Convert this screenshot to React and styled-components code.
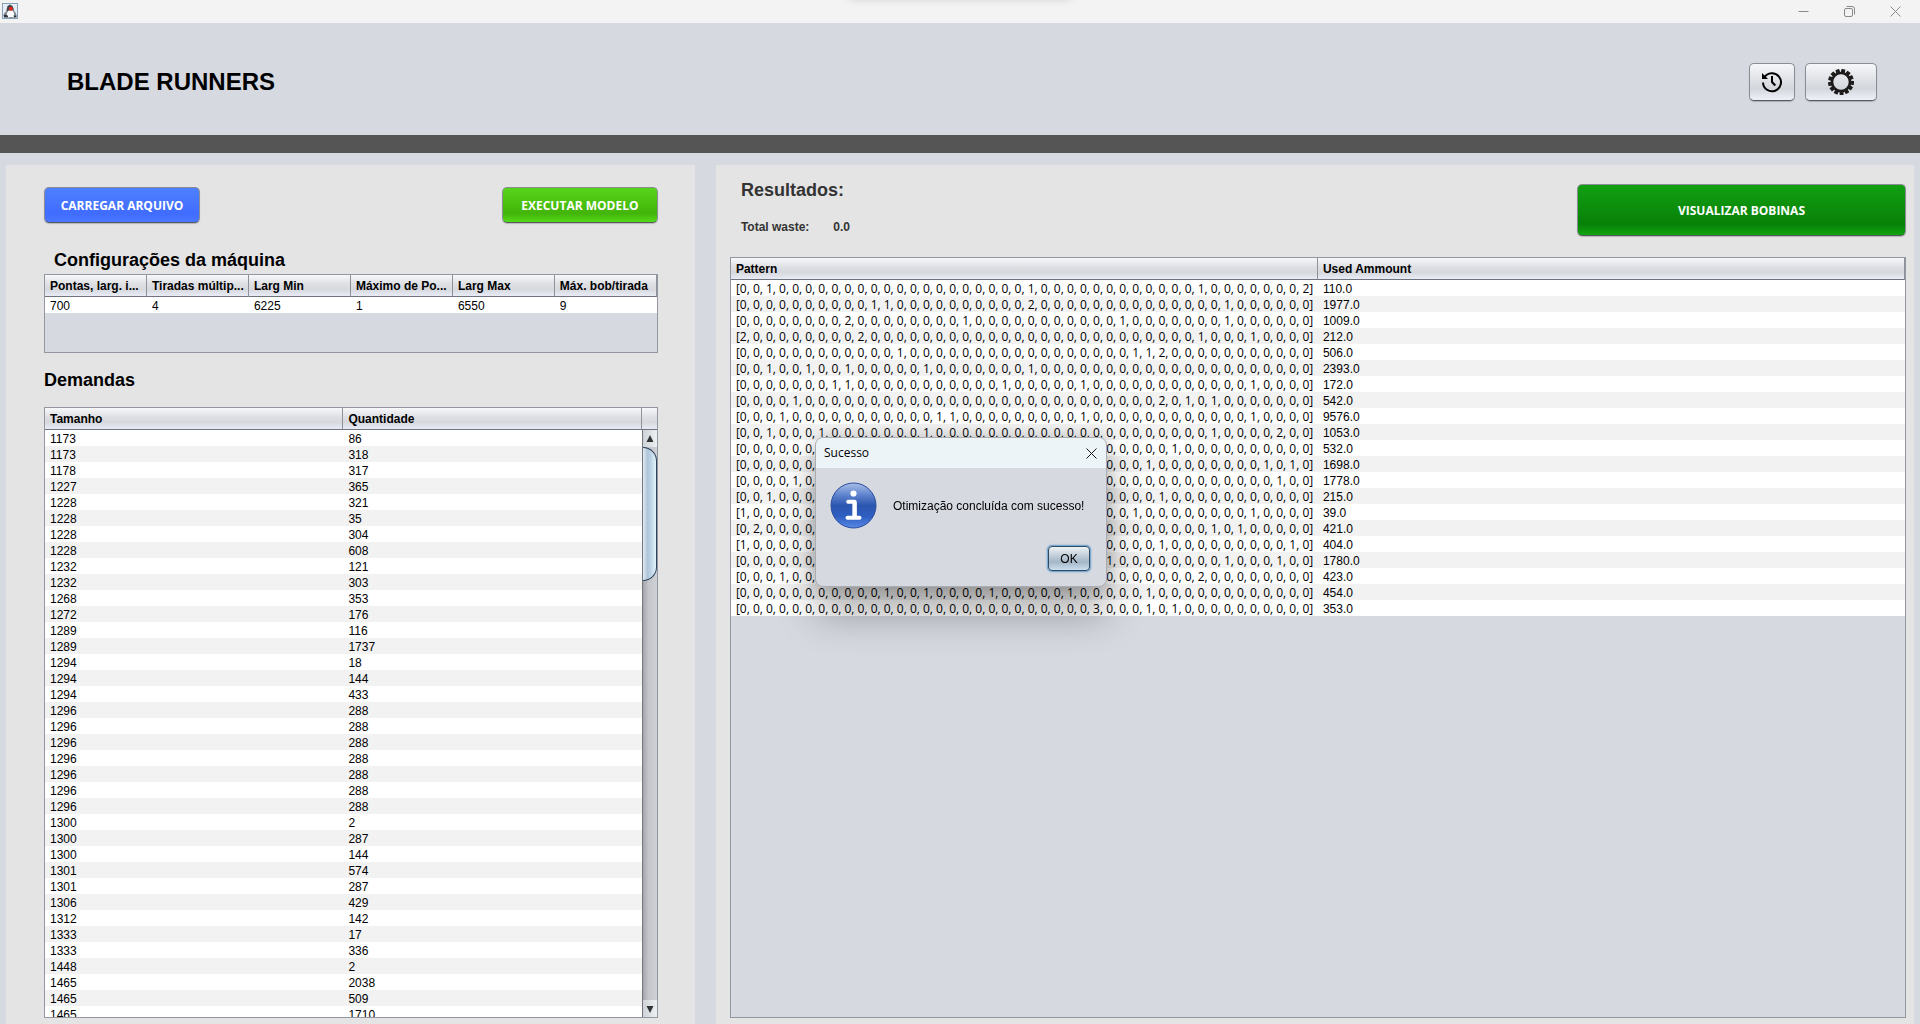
import React from "react";
import styled, { createGlobalStyle, css } from "styled-components";

const ui = '"Liberation Sans", Arial, Helvetica, sans-serif';
const segoe = '"Open Sans", "Noto Sans", sans-serif';

const Global = createGlobalStyle`
  *, *::before, *::after { box-sizing: border-box; }
  body { margin: 0; background: #d6d9e0; font: 12px/16px ${ui}; color: #000; }
  h1, h2, h3, p, dl, dd, dt { margin: 0; }
  button { font: inherit; color: inherit; padding: 0; cursor: pointer; }
`;

const Window = styled.div`
  display: flex;
  flex-direction: column;
  height: 100vh;
  min-height: 640px;
  overflow: hidden;
`;

const TitleBar = styled.div`
  position: relative;
  overflow: hidden;
  display: flex;
  justify-content: space-between;
  align-items: center;
  flex: none;
  height: 23px;
  padding: 0 2px 1px;
  background: #f3f3f3;

  &::before {
    content: "";
    position: absolute;
    top: -10px;
    left: 50%;
    width: 224px;
    height: 10px;
    margin-left: -112px;
    border-radius: 8px;
    box-shadow: 0 0 8px rgba(0, 0, 0, 0.12);
  }
`;

const Caption = styled.div`
  display: flex;
`;

const CaptionButton = styled.button`
  display: grid;
  place-items: center;
  width: ${(p) => p.$width || 46}px;
  height: 20px;
  border: 0;
  background: none;
  color: ${(p) => p.$color || "#8a8a8a"};
`;

const Header = styled.header`
  display: flex;
  align-items: center;
  justify-content: space-between;
  flex: none;
  height: 130px;
  padding: 6px 43px 0 67px;
  border-bottom: 18px solid #555;
`;

const AppTitle = styled.h1`
  font-size: 24px;
  line-height: 28px;
`;

const Tools = styled.div`
  display: flex;
  gap: 10px;
`;

const raised = css`
  border: 1px solid #8a8d94;
  border-bottom-color: #55585e;
  border-radius: 5px;
  box-shadow: 0 1px 1px rgba(0, 0, 0, 0.2);
`;

const ToolButton = styled.button`
  ${raised}
  display: grid;
  place-items: center;
  width: ${(p) => p.$width}px;
  height: 38px;
  background: linear-gradient(#f6f7f9, #dfe1e6 45%, #d3d6dc 68%, #eef1f8);
`;

const tones = {
  blue: "linear-gradient(#4f80ff, #4573ff 50%, #406cff 75%, #4a78ff)",
  lime: "linear-gradient(#56d41a, #48bd0c 55%, #43b40b 75%, #54da16)",
  green: "linear-gradient(#11a011, #0b8a0b 55%, #088008 78%, #10a410)",
};

const ActionButton = styled.button`
  ${raised}
  width: ${(p) => p.$width}px;
  height: ${(p) => p.$height || 36}px;
  padding-top: 2px;
  background: ${(p) => tones[p.$tone]};
  color: #fff;
  font: 700 12px/16px ${segoe};
`;

const Workspace = styled.main`
  display: grid;
  grid-template-columns: minmax(0, 23fr) minmax(0, 40fr);
  gap: 21px;
  flex: 1;
  min-height: 0;
  padding: 12px 6px 0;
`;

const Panel = styled.section`
  display: flex;
  flex-direction: column;
  min-height: 0;
  padding: ${(p) => p.$padding};
  background: #e4e4e4;
`;

const Row = styled.div`
  display: flex;
  justify-content: space-between;
  align-items: center;
  margin-bottom: ${(p) => p.$after}px;
`;

const Summary = styled.div`
  padding: 0 0 5px 11px;
`;

const Heading = styled.h2`
  margin: ${(p) => p.$margin || 0};
  font-size: 18px;
  line-height: 20px;
  color: ${(p) => p.$color || "#000"};
`;

const Waste = styled.dl`
  display: flex;
  gap: 24px;
  margin-top: 19px;
  font-weight: 700;
  color: #333;
`;

const Frame = styled.div`
  display: flex;
  align-items: flex-start;
  flex: ${(p) => (p.$height ? "none" : "1")};
  height: ${(p) => (p.$height ? `${p.$height}px` : "auto")};
  min-height: 0;
  overflow: hidden;
  border: 1px solid #9297a1;
  background: #d6d9e0;
`;

const headFill = css`
  height: 22px;
  border-bottom: 1px solid #6f737d;
  background: linear-gradient(#f8f8fa, #dfe1e5 40%, #d6d8dd 68%, #e9ecf6);
`;

const Table = styled.table`
  flex: 1;
  width: 100%;
  min-width: 0;
  table-layout: fixed;
  border-collapse: separate;
  border-spacing: 0;
`;

const Th = styled.th`
  ${headFill}
  width: ${(p) => p.$width || "auto"};
  padding: 2px 1px 0 5px;
  border-right: 1px solid #8e929b;
  text-align: left;
  line-height: 19px;
  white-space: nowrap;
  overflow: hidden;
`;

const Td = styled.td`
  height: 16px;
  padding: 2px 1px 0 5px;
  line-height: 14px;
  white-space: nowrap;
  overflow: hidden;
`;

const PatternTd = styled(Td)`
  padding-top: 1px;
  font-family: ${segoe};
`;

const Tr = styled.tr`
  background: #fff;
  &:nth-child(even) { background: #f2f2f2; }
`;

const ScrollColumn = styled.div`
  display: flex;
  flex-direction: column;
  align-self: stretch;
  flex: none;
  width: 15px;
`;

const ScrollCorner = styled.div`
  ${headFill}
  flex: none;
`;

const ScrollTrack = styled.div`
  display: flex;
  flex-direction: column;
  flex: 1;
  min-height: 0;
  border-left: 1px solid #74777d;
  background: linear-gradient(90deg, #a4a6ab, #c4c6cb 40%, #cfd1d6);
`;

const ScrollButton = styled.button`
  display: grid;
  place-items: center;
  flex: none;
  height: 17px;
  margin-top: ${(p) => (p.$end ? "auto" : 0)};
  border: 0;
  background: linear-gradient(90deg, #cfd2d6, #eef1f3);
`;

const ScrollThumb = styled.div`
  flex: none;
  height: 134px;
  border: 1px solid #2c4258;
  border-left: 0;
  border-radius: 0 14px 14px 0;
  background: linear-gradient(90deg, #dfeaf3, #b0c5da 35%, #bdd3e5 60%, #e2f4fd);
`;

const Dialog = styled.div`
  position: fixed;
  top: 50%;
  left: 50%;
  width: 292px;
  height: 150px;
  margin: -75px 0 0 -145px;
  display: flex;
  flex-direction: column;
  border: 1px solid #a9acb2;
  border-radius: 8px;
  overflow: hidden;
  background: #d6d9e0;
  box-shadow: 0 0 18px rgba(0, 0, 0, 0.18), 0 26px 42px rgba(0, 0, 0, 0.32);
`;

const DialogTitle = styled.div`
  display: flex;
  align-items: center;
  justify-content: space-between;
  height: 30px;
  flex: none;
  padding: 0 4px 0 8px;
  background: #ecf4f8;
  font: 12px/16px ${segoe};
`;

const DialogBody = styled.div`
  display: flex;
  align-items: center;
  gap: 16px;
  padding: 14px 14px 0;
`;

const DialogActions = styled.div`
  display: flex;
  justify-content: flex-end;
  padding: 17px 16px 0;
`;

const OkButton = styled.button`
  width: 42px;
  height: 25px;
  border: 1px solid #2f4a63;
  border-radius: 4px;
  background: linear-gradient(#eef2f5, #b9c7d3 45%, #a4b6c6 65%, #cbdff0);
  box-shadow: 0 0 0 1px #7ba9d0, 0 0 2px 1px #7ba9d0;
  outline: none;
`;

const machine = [
  ["Pontas, larg. i...", "700"],
  ["Tiradas múltip...", "4"],
  ["Larg Min", "6225"],
  ["Máximo de Po...", "1"],
  ["Larg Max", "6550"],
  ["Máx. bob/tirada", "9"],
];

const demands = [
  [1173, 86], [1173, 318], [1178, 317], [1227, 365], [1228, 321], [1228, 35],
  [1228, 304], [1228, 608], [1232, 121], [1232, 303], [1268, 353], [1272, 176],
  [1289, 116], [1289, 1737], [1294, 18], [1294, 144], [1294, 433], [1296, 288],
  [1296, 288], [1296, 288], [1296, 288], [1296, 288], [1296, 288], [1296, 288],
  [1300, 2], [1300, 287], [1300, 144], [1301, 574], [1301, 287], [1306, 429],
  [1312, 142], [1333, 17], [1333, 336], [1448, 2], [1465, 2038], [1465, 509],
  [1465, 1710],
];

// Each pattern lists only its non-zero cuts, keyed by position.
const PATTERN_LENGTH = 44;
const results = [
  [{ 2: 1, 22: 1, 35: 1, 43: 2 }, "110.0"],
  [{ 10: 1, 11: 1, 22: 2, 37: 1 }, "1977.0"],
  [{ 8: 2, 17: 1, 29: 1, 37: 1 }, "1009.0"],
  [{ 0: 2, 9: 2, 35: 1, 39: 1 }, "212.0"],
  [{ 12: 1, 30: 1, 31: 1, 32: 2 }, "506.0"],
  [{ 2: 1, 5: 1, 8: 1, 14: 1, 22: 1 }, "2393.0"],
  [{ 7: 1, 8: 1, 20: 1, 26: 1, 39: 1 }, "172.0"],
  [{ 4: 1, 32: 2, 34: 1, 36: 1 }, "542.0"],
  [{ 3: 1, 15: 1, 16: 1, 26: 1, 39: 1 }, "9576.0"],
  [{ 2: 1, 6: 1, 14: 1, 36: 1, 41: 2 }, "1053.0"],
  [{ 33: 1 }, "532.0"],
  [{ 31: 1, 40: 1, 42: 1 }, "1698.0"],
  [{ 4: 1, 41: 1 }, "1778.0"],
  [{ 2: 1, 32: 1 }, "215.0"],
  [{ 0: 1, 30: 1, 39: 1 }, "39.0"],
  [{ 1: 2, 36: 1, 38: 1 }, "421.0"],
  [{ 0: 1, 32: 1, 42: 1 }, "404.0"],
  [{ 28: 1, 37: 1, 41: 1 }, "1780.0"],
  [{ 3: 1, 35: 2 }, "423.0"],
  [{ 11: 1, 14: 1, 19: 1, 25: 1, 31: 1 }, "454.0"],
  [{ 27: 3, 31: 1, 33: 1 }, "353.0"],
];

const formatPattern = (cuts) =>
  `[${Array.from({ length: PATTERN_LENGTH }, (_, i) => cuts[i] || 0).join(", ")}]`;

const DukeIcon = () => (
  <svg width="16" height="16" viewBox="0 0 16 16" aria-hidden="true">
    <rect x="0.500" y="0.500" width="15" height="15" fill="#e6edf4" stroke="#86a0b8" />
    <path d="M5.500 3 8 1.500 10.500 3l1 2.500.5 3.500H5L4.500 7z" fill="#3d454b" />
    <path d="M2 10.500 4.500 8H6v3.500H2.500zM11 8h1.500l1.500 2.500.5 2.500H12z" fill="#7d8890" />
    <path d="M5 10l1.500-2.500h4.500L12 11l.5 3H4.500z" fill="#fff" />
    <path d="M1.500 11.500h3L6 13v1.500H2zM11.500 12.500h3v2h-2.500z" fill="#2f373d" />
    <path d="M6.500 14.500h5" stroke="#8b959d" />
    <circle cx="8.800" cy="5.800" r="2" fill="#e8261d" />
  </svg>
);

const HistoryIcon = () => (
  <svg width="22" height="22" viewBox="0 0 22 22" fill="none" stroke="#000" strokeWidth="2" aria-hidden="true">
    <path d="M3.300 6.600A9 9 0 1 1 2 11.500" />
    <path d="M1 2v6h6z" fill="#000" stroke="none" />
    <path d="M11 5v6l3.300 3.500" />
  </svg>
);

const teeth = Array.from({ length: 13 }, (_, i) => (i * 360) / 13 + 11);

const GearIcon = () => (
  <svg width="26" height="26" viewBox="0 0 26 26" aria-hidden="true">
    <circle cx="13" cy="13" r="9" fill="none" stroke="#1d1b1b" strokeWidth="2.600" />
    {teeth.map((a) => (
      <rect key={a} x="11" y="0" width="4" height="4" rx="0.500" fill="#1d1b1b" transform={`rotate(${a} 13 13)`} />
    ))}
  </svg>
);

const CrossIcon = () => (
  <svg width="11" height="11" viewBox="0 0 11 11" fill="none" stroke="currentColor" aria-hidden="true">
    <path d="M.5.5l10 10M10.500.5l-10 10" />
  </svg>
);

const InfoIcon = () => (
  <svg width="47" height="47" viewBox="0 0 47 47" role="img" aria-label="Informação">
    <defs>
      <linearGradient id="info" x1="0" y1="0" x2="0" y2="1">
        <stop offset="0" stopColor="#a9bfe8" />
        <stop offset=".28" stopColor="#5b80cc" />
        <stop offset=".5" stopColor="#2c57b0" />
        <stop offset=".75" stopColor="#2f5fc2" />
        <stop offset="1" stopColor="#5a8ae6" />
      </linearGradient>
    </defs>
    <circle cx="23.500" cy="23.500" r="22.500" fill="url(#info)" stroke="#2b4c9c" />
    <circle cx="23.500" cy="11.500" r="3.100" fill="#fff" />
    <path d="M18.200 19.800h6.500v14.400M17.500 35.700h12" fill="none" stroke="#fff" strokeWidth="4" strokeLinecap="round" strokeLinejoin="round" />
    <path d="M22.500 20h4v15h-4z" fill="#fff" />
  </svg>
);

const Arrow = ({ down }) => (
  <svg width="8" height="8" viewBox="0 0 8 8" aria-hidden="true">
    <path d={down ? "M.5 1h7L4 8z" : "M.5 7h7L4 0z"} fill="#333" />
  </svg>
);

export default function App() {
  return (
    <Window>
      <Global />
      <TitleBar>
        <DukeIcon />
        <Caption>
          <CaptionButton aria-label="Minimizar">
            <svg width="11" height="11" viewBox="0 0 11 11" stroke="currentColor" aria-hidden="true"><path d="M.5 5.500h10" /></svg>
          </CaptionButton>
          <CaptionButton aria-label="Restaurar">
            <svg width="11" height="11" viewBox="0 0 11 11" fill="none" stroke="currentColor" aria-hidden="true">
              <rect x=".5" y="2.500" width="8" height="8" rx="1.500" />
              <path d="M2.500.5h5.500a2.500 2.500 0 0 1 2.500 2.500v5.500" />
            </svg>
          </CaptionButton>
          <CaptionButton aria-label="Fechar"><CrossIcon /></CaptionButton>
        </Caption>
      </TitleBar>

      <Header>
        <AppTitle>BLADE RUNNERS</AppTitle>
        <Tools>
          <ToolButton $width={46} aria-label="Histórico"><HistoryIcon /></ToolButton>
          <ToolButton $width={72} aria-label="Configurações"><GearIcon /></ToolButton>
        </Tools>
      </Header>

      <Workspace>
        <Panel $padding="22px 37px 6px 38px">
          <Row $after={27}>
            <ActionButton $tone="blue" $width={156}>CARREGAR ARQUIVO</ActionButton>
            <ActionButton $tone="lime" $width={156}>EXECUTAR MODELO</ActionButton>
          </Row>
          <Heading $margin="0 0 4px 10px">Configurações da máquina</Heading>
          <Frame $height={79}>
            <Table>
              <thead>
                <tr>{machine.map(([name]) => <Th key={name} scope="col">{name}</Th>)}</tr>
              </thead>
              <tbody>
                <Tr>{machine.map(([name, value]) => <Td key={name}>{value}</Td>)}</Tr>
              </tbody>
            </Table>
          </Frame>
          <Heading $margin="17px 0">Demandas</Heading>
          <Frame>
            <Table>
              <thead>
                <tr><Th scope="col">Tamanho</Th><Th scope="col">Quantidade</Th></tr>
              </thead>
              <tbody>
                {demands.map(([size, amount], i) => (
                  <Tr key={i}><Td>{size}</Td><Td>{amount}</Td></Tr>
                ))}
              </tbody>
            </Table>
            <ScrollColumn>
              <ScrollCorner />
              <ScrollTrack>
                <ScrollButton aria-label="Rolar para cima"><Arrow /></ScrollButton>
                <ScrollThumb />
                <ScrollButton $end aria-label="Rolar para baixo"><Arrow down /></ScrollButton>
              </ScrollTrack>
            </ScrollColumn>
          </Frame>
        </Panel>

        <Panel $padding="15px 8px 6px 14px">
          <Row $after={17}>
            <Summary>
              <Heading $color="#333">Resultados:</Heading>
              <Waste><dt>Total waste:</dt><dd>0.0</dd></Waste>
            </Summary>
            <ActionButton $tone="green" $width={329} $height={52}>VISUALIZAR BOBINAS</ActionButton>
          </Row>
          <Frame>
            <Table>
              <thead>
                <tr><Th scope="col" $width="50%">Pattern</Th><Th scope="col">Used Ammount</Th></tr>
              </thead>
              <tbody>
                {results.map(([cuts, used], i) => (
                  <Tr key={i}><PatternTd>{formatPattern(cuts)}</PatternTd><Td>{used}</Td></Tr>
                ))}
              </tbody>
            </Table>
          </Frame>
        </Panel>
      </Workspace>

      <Dialog role="dialog" aria-labelledby="dialog-title">
        <DialogTitle>
          <span id="dialog-title">Sucesso</span>
          <CaptionButton $width={22} $color="#1a1a1a" aria-label="Fechar aviso"><CrossIcon /></CaptionButton>
        </DialogTitle>
        <DialogBody>
          <InfoIcon />
          <p>Otimização concluída com sucesso!</p>
        </DialogBody>
        <DialogActions><OkButton>OK</OkButton></DialogActions>
      </Dialog>
    </Window>
  );
}
